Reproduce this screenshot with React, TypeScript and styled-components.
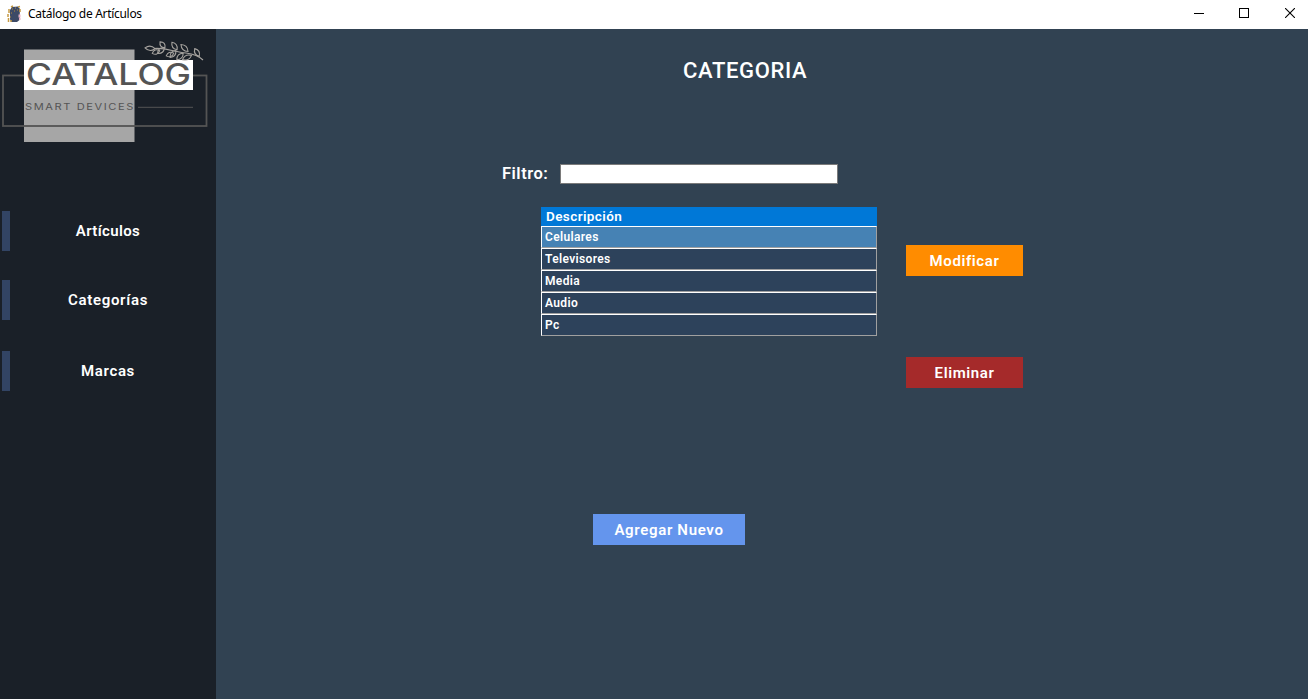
import React from 'react';
import styled, { createGlobalStyle } from 'styled-components';

const GlobalStyle = createGlobalStyle`
  body { margin: 0; overflow: hidden; }
  * { box-sizing: border-box; }
`;

const Window = styled.div`
  width: 1308px;
  height: 699px;
  display: flex;
  flex-direction: column;
  background: #314252;
  color: #fff;
  font-family: Roboto, sans-serif;
  font-weight: 600;
`;

const TitleBar = styled.header`
  height: 29px;
  flex: none;
  display: flex;
  align-items: center;
  padding: 0 0 2px 6px;
  background: #fff;
  color: #000;
`;

const AppTitle = styled.span`
  margin-left: 6px;
  font: 400 12px/16px 'Noto Sans', sans-serif;
  letter-spacing: -0.3px;
  flex: 1;
`;

const CaptionButtons = styled.div`
  display: flex;
  gap: 35px;
  padding: 0 13px 1px 0;
  svg { display: block; }
`;

const Body = styled.div`
  flex: 1;
  display: flex;
`;

const Sidebar = styled.aside`
  width: 216px;
  background: #1a2028;
`;

const LogoBox = styled.div`
  height: 182px;
  svg { display: block; }
`;

const NavItem = styled.div<{ $gap: number }>`
  height: 40px;
  margin-bottom: ${(p) => p.$gap}px;
  margin-left: 2px;
  padding-right: 2px;
  border-left: 8px solid #324464;
  display: flex;
`;

const NavLabel = styled.span<{ $spacing: number }>`
  width: 196px;
  text-align: center;
  font-size: 15px;
  line-height: 40px;
  letter-spacing: ${(p) => p.$spacing}px;
`;

const Main = styled.main`
  flex: 1;
`;

const Heading = styled.h1`
  margin: 26px 0 0 467px;
  font-size: 22px;
  font-weight: 500;
  line-height: 32px;
  letter-spacing: 0.65px;
`;

const FilterRow = styled.div`
  display: flex;
  align-items: center;
  margin: 77px 0 0 286px;
  height: 20px;
`;

const FilterLabel = styled.label`
  width: 58px;
  font-size: 16.5px;
  line-height: 18px;
  letter-spacing: 0.5px;
`;

const FilterInput = styled.input`
  width: 278px;
  height: 20px;
  padding: 0 3px;
  border: 1px solid #7a7a7a;
  border-radius: 0;
  background: #fff;
  outline: none;
`;

const Content = styled.div`
  display: flex;
  align-items: flex-start;
  margin: 23px 0 0 325px;
  height: 307px;
`;

const Grid = styled.div`
  width: 336px;
`;

const GridHeader = styled.div`
  height: 19px;
  padding-left: 5px;
  background: #0078d7;
  font-size: 13.5px;
  line-height: 18px;
  letter-spacing: 0.4px;
`;

const GridRow = styled.div<{ $selected?: boolean }>`
  height: 22px;
  padding-left: 3px;
  background: ${(p) => (p.$selected ? '#4682b4' : '#2d425b')};
  border: 1px solid #a0a0a0;
  border-top-color: #fff;
  border-left-color: #fff;
  font-size: 12px;
  line-height: 20px;
  letter-spacing: 0.35px;
`;

const Actions = styled.div`
  display: flex;
  flex-direction: column;
  gap: 81px;
  margin: 38px 0 0 29px;
`;

const Button = styled.button<{ $color: string; $width: number; $spacing: number }>`
  width: ${(p) => p.$width}px;
  height: 31px;
  padding: 0;
  border: 0;
  background: ${(p) => p.$color};
  color: #fff;
  font: inherit;
  font-size: 15px;
  line-height: 30px;
  letter-spacing: ${(p) => p.$spacing}px;
`;

const Footer = styled.div`
  margin-left: 377px;
`;

const rows = ['Celulares', 'Televisores', 'Media', 'Audio', 'Pc'];

const AppIcon = () => (
  <svg width="16" height="18" viewBox="0 0 16 18">
    <path d="M4 5 6 2 12 1.5 14 4 13.5 15 11 17 5 17 4 14Z" fill="#3d4a66" />
    <path d="M3 4v4M2 9v3M2.5 13v4M4 16h2M5 2l2-1M12 2l2-.5M14 4v3" stroke="#c69b45" strokeWidth="1.5" fill="none" />
    <path d="M6 4h1M9 3h1M8 6h1M11 5h1M5 8h1M4 12h1" stroke="#b58b3f" />
    <path d="M13.5 9.5v3M13 14h1.5" stroke="#eab2c5" strokeWidth="2" />
  </svg>
);

// x, y of the leaf's centre, half length, angle
const leaves: [number, number, number, number][] = [
  [150, 48.3, 5, 5], [156, 52, 4, -20], [161, 50.5, 4.5, -40], [162.5, 44.8, 3.8, 50],
  [170, 54.5, 4, -20], [173, 54, 4.5, -50], [174.5, 46, 4.5, 55], [180, 56.5, 4.5, -45],
  [184.5, 48, 5, 45], [187, 57.5, 5, -25], [197, 52.5, 4.5, 60],
];

const Logo = () => (
  <svg width="216" height="121" viewBox="0 29 216 121">
    <rect x="24" y="49.5" width="110.5" height="92.5" fill="#a6a6a6" />
    <rect x="3" y="75.5" width="203.5" height="50.5" fill="none" stroke="#545454" strokeWidth="1.8" />
    <rect x="24" y="60" width="169" height="30" fill="#fff" />
    <text x="26" y="85" textLength="165" lengthAdjust="spacingAndGlyphs" fontFamily="Inter" fontWeight="500" fontSize="29.5" fill="#545454">CATALOG</text>
    <text x="25" y="110" textLength="110" lengthAdjust="spacingAndGlyphs" fontFamily="Inter" fontWeight="400" fontSize="8.3" letterSpacing="1.2" fill="#545454">SMART DEVICES</text>
    <path d="M138 107.3h55" stroke="#545454" />
    <g fill="none" stroke="#a6a39f" strokeWidth="1.1">
      <path d="M154 48.5C167 47.5 174 52 186 53 194 54 199 56 203 60" />
      {leaves.map(([x, y, r, a]) => (
        <path key={x} d={`M${-r} 0Q0 -4.4 ${r} 0Q0 4.4 ${-r} 0Z`} transform={`translate(${x} ${y}) rotate(${a})`} />
      ))}
    </g>
  </svg>
);

export default function App() {
  return (
    <Window>
      <GlobalStyle />
      <TitleBar>
        <AppIcon />
        <AppTitle>Catálogo de Artículos</AppTitle>
        <CaptionButtons>
          <svg width="10" height="10"><path d="M0 5.5h10" stroke="#000" /></svg>
          <svg width="11" height="10"><rect x=".5" y=".5" width="9" height="9" fill="none" stroke="#000" /></svg>
          <svg width="10" height="10"><path d="m0 0 10 10M10 0 0 10" stroke="#000" strokeWidth="1.1" /></svg>
        </CaptionButtons>
      </TitleBar>
      <Body>
        <Sidebar>
          <LogoBox><Logo /></LogoBox>
          <NavItem $gap={29}><NavLabel $spacing={0.35}>Artículos</NavLabel></NavItem>
          <NavItem $gap={31}><NavLabel $spacing={0.7}>Categorías</NavLabel></NavItem>
          <NavItem $gap={0}><NavLabel $spacing={0.65}>Marcas</NavLabel></NavItem>
        </Sidebar>
        <Main>
          <Heading>CATEGORIA</Heading>
          <FilterRow>
            <FilterLabel htmlFor="filtro">Filtro:</FilterLabel>
            <FilterInput id="filtro" />
          </FilterRow>
          <Content>
            <Grid>
              <GridHeader>Descripción</GridHeader>
              {rows.map((r, i) => <GridRow key={r} $selected={i === 0}>{r}</GridRow>)}
            </Grid>
            <Actions>
              <Button $color="#ff8c00" $width={117} $spacing={0.6}>Modificar</Button>
              <Button $color="#a52a2a" $width={117} $spacing={0.6}>Eliminar</Button>
            </Actions>
          </Content>
          <Footer>
            <Button $color="#6495ed" $width={152} $spacing={0.67}>Agregar Nuevo</Button>
          </Footer>
        </Main>
      </Body>
    </Window>
  );
}
